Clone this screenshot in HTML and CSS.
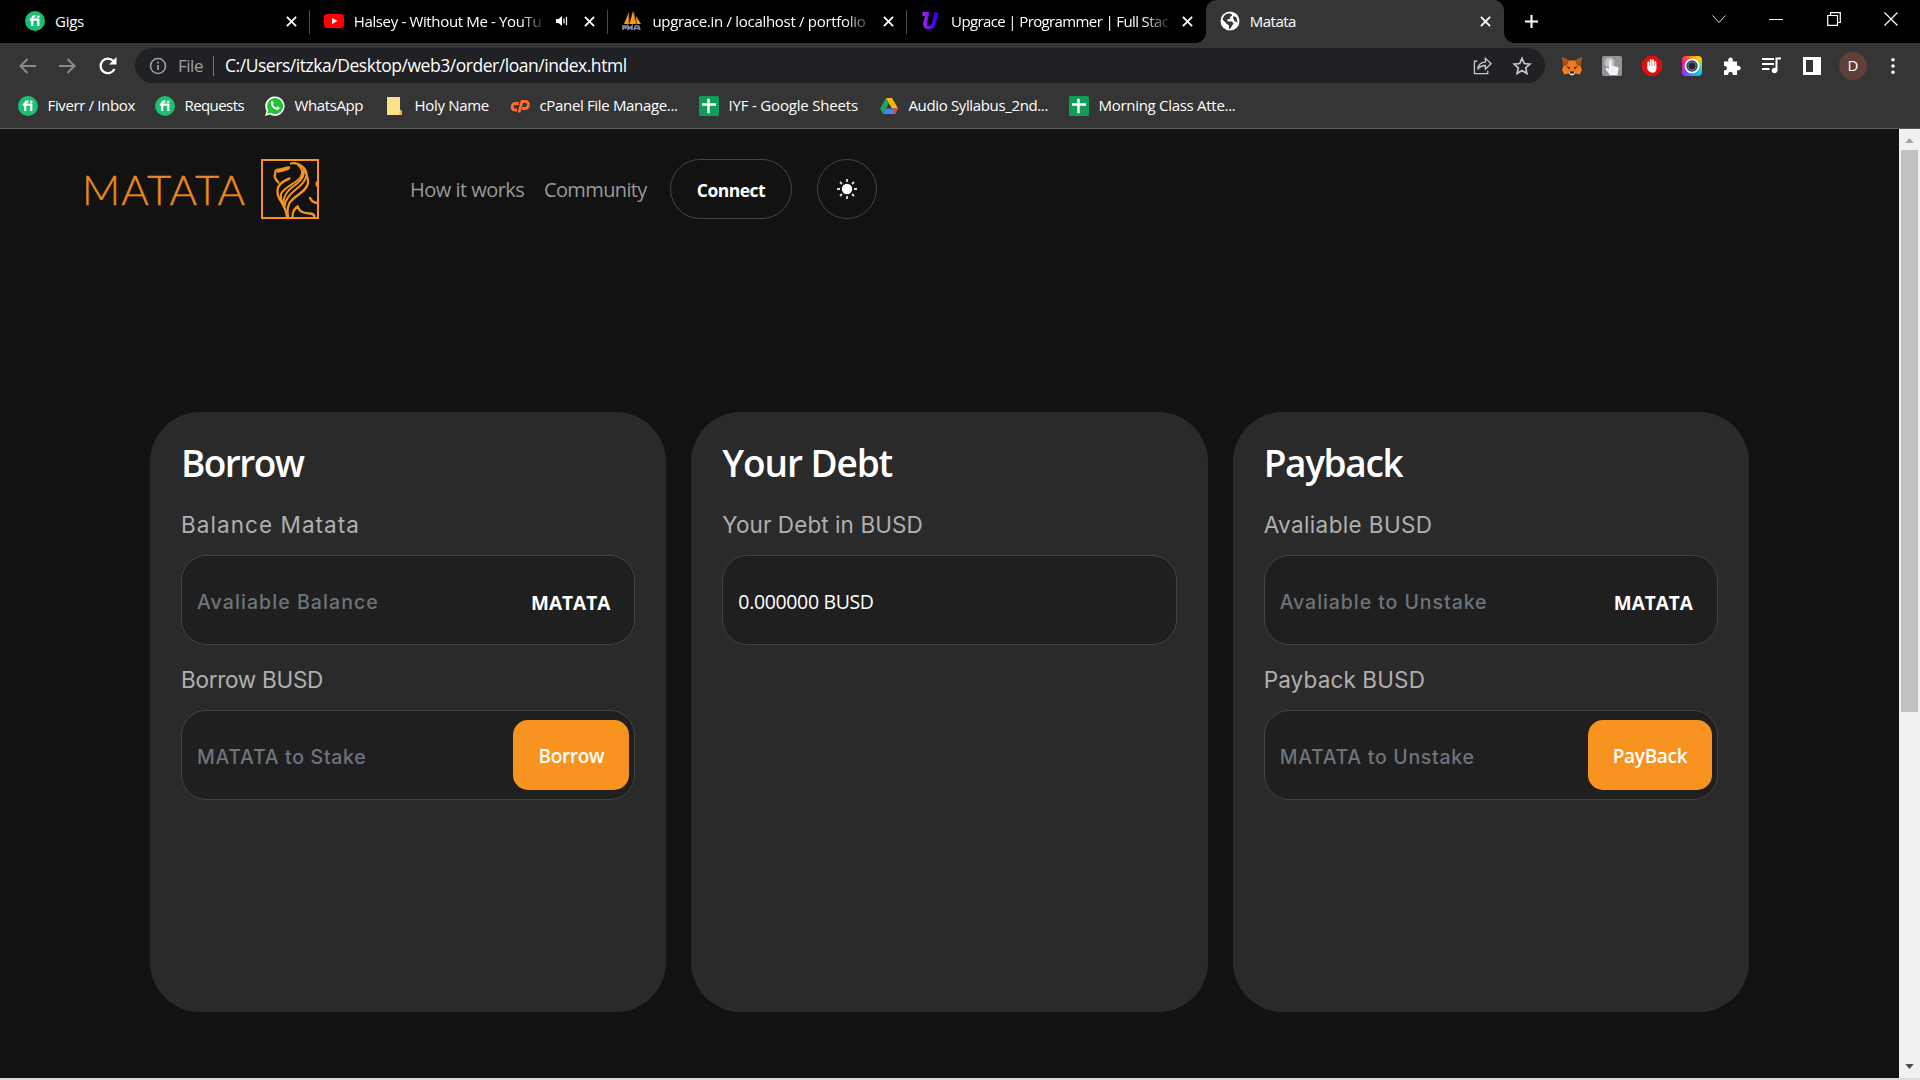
FILE: index.html
```html
<!DOCTYPE html>
<html lang="en">
<head>
<meta charset="utf-8">
<title>Matata</title>
<link rel="stylesheet" href="styles.css">
</head>
<body>
<svg class="defs" width="0" height="0">
  <symbol id="x" viewBox="0 0 12 12"><path d="M1 1l10 10M11 1L1 11" stroke="#fff" stroke-width="2" fill="none"/></symbol>
  <symbol id="fi" viewBox="0 0 20 20"><circle cx="10" cy="10" r="10" fill="#1dbf73"/><path d="M4.800 8.600h8.500v6.400M7.200 15V8c0-2 1-2.800 3.200-2.600" fill="none" stroke="#fff" stroke-width="2.200"/><circle cx="13.300" cy="5.800" r="1.300" fill="#fff"/></symbol>
  <symbol id="sheet" viewBox="0 0 20 20"><rect width="20" height="20" rx="1.500" fill="#0f9d58"/><path d="M9.500 2.800v14.400M3 8.500h14" stroke="#fff" stroke-width="2.400"/></symbol>
</svg>

<header class="browser">
  <div class="tabstrip">
    <div class="tab"><svg class="fav"><use href="#fi"/></svg><span class="title t-gigs">Gigs</span><svg class="close"><use href="#x"/></svg></div>
    <div class="tab split"><svg class="fav" viewBox="0 0 20 20"><rect y="3" width="20" height="14" rx="3.200" fill="#f00"/><path d="M8 7l5.500 3L8 13z" fill="#fff"/></svg><span class="title short fade t-halsey">Halsey - Without Me - YouTu</span><svg class="sound" viewBox="0 0 12 12"><path d="M0 4h2.500L6 1v10L2.500 8H0z" fill="#fff"/><path d="M8 3.500v5M10.500 2v8" stroke="#fff" stroke-width="1.200"/></svg><svg class="close"><use href="#x"/></svg></div>
    <div class="tab split"><svg class="fav" viewBox="0 0 20 20"><path d="M2 13L6.500 2l.5 11zM7.500 13L11 0l3 13zM14.500 13L14 5l5 8z" fill="#f89c0e"/><path d="M7 13L6.500 2M14 13L11.500 1" stroke="#c96a10"/><path d="M1 19v-4h3v2H1M6 19v-4l2 2.500 2-2.500v4M12 19l1.500-4h3l1.500 4M13 17.500h4" fill="none" stroke="#8a8cae" stroke-width="1.600"/></svg><span class="title fade t-upin">upgrace.in / localhost / portfolio</span><svg class="close"><use href="#x"/></svg></div>
    <div class="tab split"><svg class="fav" viewBox="0 0 20 20"><defs><linearGradient id="ug"><stop stop-color="#a32de8"/><stop offset=".6" stop-color="#5a08ee"/><stop offset="1" stop-color="#3d00f5"/></linearGradient></defs><path d="M1.500 3h4.600L4.100 13c-.6 4.500 6.900 5 8.500 0L15.500 1.500" fill="none" stroke="url(#ug)" stroke-width="3.800"/></svg><span class="title fade t-up">Upgrace | Programmer | Full Stac</span><svg class="close"><use href="#x"/></svg></div>
    <div class="tab active"><svg class="fav" viewBox="0 0 20 20"><circle cx="10" cy="10" r="9.500" fill="#fff"/><path d="M8 2.500c3 0 4 .5 4 2L10 6v2H7.500v2.500H12l1.500 2L12 15l-2 3c-1.500 0-1-2-1-3.500l-2-1.500-4.500-4.500C3.500 5 5 3 8 2.500zM13.500 5l3 1.500 1 5-3-1.500-1.500-3z" fill="#35363a"/></svg><span class="title t-mat">Matata</span><svg class="close"><use href="#x"/></svg></div>
    <svg class="plus" viewBox="0 0 16 16"><path d="M8 1v14M1 8h14" stroke="#fff" stroke-width="2.200"/></svg>
    <div class="window-controls">
      <svg viewBox="0 0 14 14"><path d="M.5 3.500L7 10.500l6.500-7" fill="none" stroke="#ddd"/></svg>
      <svg viewBox="0 0 14 14"><path d="M0 7.500h14" stroke="#fff"/></svg>
      <svg viewBox="0 0 14 14"><path d="M.7 3.500h9.800v9.800H.7zM3.500 3.500V.7h9.800v9.800h-2.800" fill="none" stroke="#fff" stroke-width="1.200"/></svg>
      <svg viewBox="0 0 14 14"><path d="M.5.5l13 13M13.500.5l-13 13" stroke="#fff" stroke-width="1.200"/></svg>
    </div>
  </div>

  <div class="toolbar">
    <div class="nav-buttons">
      <svg viewBox="0 0 20 20" class="dim"><path d="M18 10H3M9.500 3L2.500 10l7 7" /></svg>
      <svg viewBox="0 0 20 20" class="dim"><path d="M1 10h15M9.500 3l7 7-7 7" /></svg>
      <svg viewBox="0 0 20 20"><path d="M16.500 13A7.300 7.300 0 1 1 15.300 5" fill="none" stroke="#fff" stroke-width="2.200"/><path d="M18.500 1v7.500H11z" fill="#fff"/></svg>
    </div>
    <div class="omnibox">
      <svg class="info" viewBox="0 0 18 18"><circle cx="9" cy="9" r="7.500" fill="none" stroke="#9aa0a6" stroke-width="1.600"/><path d="M9 8v5M9 4.800v1.700" stroke="#9aa0a6" stroke-width="1.800"/></svg>
      <span class="scheme">File</span>
      <span class="url">C:/Users/itzka/Desktop/web3/order/loan/index.html</span>
      <svg class="share" viewBox="0 0 20 20"><path d="M4.500 5.500H1.500v13h14v-3M5 14c.5-5 3.500-7.500 8-7.500V2.500l6 5.700-6 5.600V10c-3.500 0-6 1-8 4z" fill="none" stroke="#c4c7c9" stroke-width="1.400"/></svg>
      <svg class="star" viewBox="0 0 20 20"><path d="M10 2.300l2.300 5.200 5.600.6-4.200 3.800 1.200 5.600-4.900-2.900-4.900 2.900 1.200-5.600L2.100 8.100l5.600-.6z" fill="none" stroke="#c4c7c9" stroke-width="1.700"/></svg>
    </div>
    <div class="extensions">
      <svg viewBox="0 0 20 20"><path d="M0 1l7 3.500h6L20 1l-1.500 9L20 14l-2 4.500-5-1-3 2.500-3-2.500-5 1L0 14l1.500-4z" fill="#f07d1c"/><path d="M0 1l7 3.500-2 5-3.500.5zM20 1l-7 3.500 2 5 3.500.5z" fill="#a84f1a"/><path d="M4 10.500l4 .5-.5 2.500zM16 10.500l-4 .5.5 2.500z" fill="#46271c"/><path d="M7 16h6l-1 3H8z" fill="#ddd"/><path d="M8 15.500h4v2H8z" fill="#222"/></svg>
      <svg viewBox="0 0 20 20"><rect width="20" height="20" rx="2" fill="#939496"/><circle cx="7.500" cy="6.500" r="5" fill="#c2c3c5"/><path d="M7 5.500c0-2 2.600-2 2.600 0v4l5.900 1.500c1 .3 1.200 1 1 2l-1 6H8l-4.500-6c0-1.500 2-1.500 3.500 0z" fill="#f0f4fa"/></svg>
      <svg viewBox="0 0 20 20"><path d="M6 0h8l6 6v8l-6 6H6l-6-6V6z" fill="#e40d0d"/><path d="M6.300 12V6.500M8.700 10V4M11.100 10V4.300M13.400 11V6" stroke="#fff" stroke-width="1.900" stroke-linecap="round"/><path d="M5.400 10h9v3c0 5-7 5-9 0z" fill="#fff"/></svg>
      <div class="camera"><svg viewBox="0 0 20 20"><circle cx="10" cy="10" r="6.600" fill="#394657" stroke="#fff" stroke-width="1.800"/><circle cx="10" cy="10" r="4" fill="#1d2937" stroke="#65758a"/></svg></div>
      <svg viewBox="0 0 20 20"><path d="M2 5.500h4.500C5 1 11 0 10.800 4v1.500H15v4.200c5-.8 5 5.300 0 4.500V19h-4.200c.6-4.500-5.200-4.500-4.600 0H2v-4.500c4 .5 4-5 0-4.500z" fill="#fff"/></svg>
      <svg viewBox="0 0 20 20"><path d="M0 3h12M0 8h12M0 13h7.500" stroke="#fff" stroke-width="2"/><circle cx="12.500" cy="14.500" r="2.700" fill="#fff"/><path d="M14.500 15V2.500H19" fill="none" stroke="#fff" stroke-width="2"/></svg>
      <svg viewBox="0 0 20 20"><path d="M1 1h18v18H1zM4 4v12h7V4z" fill="#fff" fill-rule="evenodd"/></svg>
    </div>
    <span class="avatar">D</span>
    <svg class="dots" viewBox="0 0 6 20"><circle cx="3" cy="3" r="2" fill="#fff"/><circle cx="3" cy="10" r="2" fill="#fff"/><circle cx="3" cy="17" r="2" fill="#fff"/></svg>
  </div>

  <div class="bookmarks">
    <a class="b1"><svg><use href="#fi"/></svg><span>Fiverr / Inbox</span></a>
    <a class="b2"><svg><use href="#fi"/></svg><span>Requests</span></a>
    <a class="b3"><svg viewBox="0 0 20 20"><path d="M0 20l1.500-5A9.700 9.700 0 1 1 5 18.500z" fill="#fff"/><path d="M2.200 17.800l1-3.600A8 8 0 1 1 6 17z" fill="#25c03c"/><path d="M6.300 5.500c1-1 1.700-.5 2.500 1.800L8 8.700c.7 1.500 1.700 2.400 3.200 3l1.300-1.300c2.500 1 2.500 1.300 1.700 2.500-3 3-10-3-7.900-7.400z" fill="#fff"/></svg><span>WhatsApp</span></a>
    <a class="b4"><svg viewBox="0 0 20 20"><path d="M2 1h13v13.500h2V19H2z" fill="#ffe08a"/><path d="M15 14.500h2V19h-3z" fill="#e5b93e"/></svg><span>Holy Name</span></a>
    <a class="b5"><svg viewBox="0 0 20 20"><path d="M9 7.500H5.500c-4.500 0-4.500 6.500 0 6.500H7M9 16.500l3-11h3.500c4.500 0 3.500 7-.5 7h-3" fill="none" stroke="#ff6c2c" stroke-width="2.800"/></svg><span>cPanel File Manage...</span></a>
    <a class="b6"><svg><use href="#sheet"/></svg><span>IYF - Google Sheets</span></a>
    <a class="b7"><svg viewBox="0 0 20 20"><path d="M7 2L1 12.500 4 18l6-10.500z" fill="#1fa463"/><path d="M7 2h6l6 10.500h-6z" fill="#ffba00"/><path d="M4 18l3-5.500h12L16 18z" fill="#4285f4"/><path d="M13 12.500h6L16 18z" fill="#ea4335"/></svg><span>Audio Syllabus_2nd...</span></a>
    <a class="b8"><svg><use href="#sheet"/></svg><span>Morning Class Atte...</span></a>
  </div>
</header>

<div class="viewport">
  <main class="page">
    <nav class="site-nav">
      <div class="brand"><span class="wordmark">MATATA</span>
        <svg viewBox="0 0 58 60"><g fill="none" stroke="#f7931e" stroke-width="2.300" stroke-linecap="round"><path d="M1 1h56v58H1z" stroke-width="2"/><path d="M28 8.500c-5 .5-8 2-12.500 2.500-2 .5-.5 2.500-1.500 4.500s0 4.500 3.500 8"/><path d="M27 10c-4 1-7 2-10 2.500"/><path d="M28.500 19.500C23 22 16 25 16.500 33c0 9 9 12 9.500 26"/><path d="M30 4.500c7-1.500 15 4 15.500 11 .5 3 2 4.500 1.500 8.500-1 8-12 12-17 18-4 4-4 10-3 17"/><path d="M37 6c4 3 6 8 2 13-5 6-16 9-19 16-.5 3 0 6 1.500 9" stroke-width="2"/><path d="M42.500 9c1.500 7-1 11-7 16-7 5-13 10-13 19" stroke-width="2"/><path d="M45 18c-2 11-20 14-21.500 30" stroke-width="2"/><path d="M31.500 58c0-6 2-8 5-10.500 3 7 7 6 12 7 3 0 5 1 5 4"/><path d="M49 39c2 4 5 5 8 5M57 22.500c-2 1-1.500 4 0 5" stroke-width="2.500"/></g></svg>
      </div>
      <a class="link how">How it works</a>
      <a class="link community">Community</a>
      <button class="connect">Connect</button>
      <button class="theme"><svg viewBox="0 0 22 22"><circle cx="11" cy="11" r="5.200" fill="#fff"/><path d="M11 1v3M11 18v3M1 11h3M18 11h3M4 4l2 2M16 16l2 2M18 4l-2 2M6 16l-2 2" stroke="#ddd" stroke-width="1.800"/></svg></button>
    </nav>

    <section class="cards">
      <article class="card">
        <h2 class="h-borrow">Borrow</h2>
        <label class="l-balance">Balance Matata</label>
        <div class="field"><span class="hint p-balance">Avaliable Balance</span><b class="unit">MATATA</b></div>
        <label class="l-borrow">Borrow BUSD</label>
        <div class="field"><span class="hint p-stake">MATATA to Stake</span><button class="action">Borrow</button></div>
      </article>
      <article class="card">
        <h2 class="h-debt">Your Debt</h2>
        <label class="l-debt">Your Debt in BUSD</label>
        <div class="field"><span class="value">0.000000 BUSD</span></div>
      </article>
      <article class="card">
        <h2 class="h-payback">Payback</h2>
        <label class="l-avail">Avaliable BUSD</label>
        <div class="field"><span class="hint p-avail">Avaliable to Unstake</span><b class="unit">MATATA</b></div>
        <label class="l-payback">Payback BUSD</label>
        <div class="field"><span class="hint p-unstake">MATATA to Unstake</span><button class="action wide">PayBack</button></div>
      </article>
    </section>
  </main>
  <div class="scrollbar">
    <svg viewBox="0 0 10 6"><path d="M0 6l5-6 5 6z" fill="#a3a3a3"/></svg>
    <div class="thumb"></div>
    <svg class="down" viewBox="0 0 10 6"><path d="M0 0l5 6 5-6z" fill="#505050"/></svg>
  </div>
</div>
<div class="edge"></div>
</body>
</html>
```
FILE: styles.css
```css
* { box-sizing: border-box; }
body {
  margin: 0;
  width: 1920px;
  height: 1080px;
  overflow: hidden;
  display: flex;
  flex-direction: column;
  background: #121212;
  color: #fff;
  font-family: "Open Sans", sans-serif;
}
svg { display: block; flex: none; overflow: visible; }
button { font-family: inherit; color: #fff; padding: 0; margin: 0; }
.defs { position: absolute; }

/* Browser chrome */
.browser { height: 129px; flex: none; background: #353535; border-bottom: 1px solid #5c5c5c; }
.tabstrip { height: 43px; background: #000; display: flex; align-items: center; padding-left: 11px; }
.tab { width: 298.700px; height: 43px; padding: 0 13px 1px 14px; display: flex; align-items: center; position: relative; }
.split::before { content: ""; position: absolute; left: -1px; top: 10px; width: 1px; height: 24px; background: #4c4c4c; }
.active { background: #353535; border-radius: 10px 10px 0 0; }
.active::before, .active::after { content: ""; position: absolute; bottom: 0; width: 10px; height: 10px; }
.active::before { left: -10px; background: radial-gradient(circle at 0 0, #000 9.500px, #353535 10px); }
.active::after { right: -10px; background: radial-gradient(circle at 100% 0, #000 9.500px, #353535 10px); }
.fav { width: 20px; height: 20px; margin-right: 10px; }
.title { width: 224px; font-size: 15px; line-height: 40px; padding-bottom: 1px; white-space: nowrap; }
.short { width: 194px; margin-right: 8px; }
.fade { -webkit-mask-image: linear-gradient(90deg, #000 86%, transparent 99%); mask-image: linear-gradient(90deg, #000 86%, transparent 99%); }
.t-gigs { letter-spacing: -.25px; }
.t-halsey { letter-spacing: -.35px; }
.t-upin { letter-spacing: -.3px; }
.t-up { letter-spacing: -.62px; }
.t-mat { letter-spacing: -.5px; }
.sound { width: 12px; height: 12px; margin-right: 14px; }
.close { width: 11px; height: 11px; margin-left: auto; }
.plus { width: 15px; height: 15px; margin-left: 20px; }
.window-controls { margin-left: auto; padding: 0 22px 6px 0; display: flex; gap: 43.500px; }
.window-controls svg { width: 14px; height: 14px; }

.toolbar { height: 45px; display: flex; align-items: center; }
.nav-buttons { width: 135px; padding-left: 18px; display: flex; gap: 20px; }
.nav-buttons svg { width: 20px; height: 20px; }
.dim path { fill: none; stroke: #8b8b8b; stroke-width: 2; }
.omnibox { width: 1410px; height: 35px; border-radius: 18px; background: #202124; display: flex; align-items: center; padding: 0 13px 0 14px; }
.info { width: 18px; height: 18px; }
.scheme { font-size: 17px; letter-spacing: -.48px; color: #9aa0a6; margin-left: 11px; width: 36px; line-height: 20px; border-right: 1.500px solid #777; }
.url { font-size: 17.500px; letter-spacing: -.46px; margin-left: 11px; padding-bottom: 1px; }
.share { width: 19px; height: 19px; margin-left: auto; }
.star { width: 20px; height: 20px; margin-left: 20px; }
.extensions { display: flex; gap: 20px; margin-left: 17px; }
.extensions > * { width: 20px; height: 20px; }
.camera { border-radius: 4px; background: conic-gradient(#ff9800, #ffd000 45deg, #18d5e8 110deg, #1c9aff 180deg, #9038ff 230deg, #ff1592 290deg, #ff5147 330deg, #ff9800); }
.avatar { width: 28px; height: 28px; border-radius: 50%; background: #5d4037; font-size: 15px; line-height: 27px; text-align: center; margin-left: 17px; }
.dots { width: 6px; height: 18px; margin-left: 22.500px; }

.bookmarks { height: 36px; display: flex; align-items: center; padding-left: 18px; font-size: 15px; }
.bookmarks a { display: flex; align-items: center; gap: 9.500px; white-space: nowrap; }
.bookmarks svg { width: 20px; height: 20px; }
.bookmarks span { padding-bottom: 2px; }
.b1 { width: 137px; letter-spacing: -.36px; }
.b2 { width: 110px; letter-spacing: -.58px; }
.b3 { width: 120px; letter-spacing: -.4px; }
.b4 { width: 125px; letter-spacing: -.32px; }
.b5 { width: 189px; letter-spacing: -.34px; }
.b6 { width: 180px; letter-spacing: -.18px; }
.b7 { width: 190px; letter-spacing: -.36px; }
.b8 { letter-spacing: -.29px; }

/* Site */
.viewport { flex: 1; display: flex; min-height: 0; }
.page { flex: 1; background: #121212; padding-top: 30px; }
.edge { height: 2px; flex: none; background: #dcdcdc; }
.site-nav { height: 60px; padding-left: 82px; display: flex; align-items: center; }
.brand { width: 328px; display: flex; align-items: center; }
.brand svg { width: 58px; height: 60px; }
.wordmark { width: 179px; color: #e8891c; font: 300 42px/60px Lato, sans-serif; letter-spacing: 1.100px; -webkit-text-stroke: .4px #e8891c; white-space: nowrap; }
.link { color: #999; font-size: 20px; line-height: 28px; padding-top: 1px; white-space: nowrap; }
.how { width: 134px; letter-spacing: -.52px; }
.community { width: 126px; letter-spacing: -.63px; }
.connect { width: 122px; height: 60px; border: 1px solid #454545; border-radius: 30px; background: none; font-size: 17.500px; font-weight: 700; letter-spacing: -.5px; padding-top: 2px; }
.theme { width: 60px; height: 60px; border: 1px solid #454545; border-radius: 50%; background: none; margin-left: 25px; display: grid; place-items: center; }
.theme svg { width: 22px; height: 22px; }

.cards { margin: 193px 0 0 150px; width: 1599px; height: 600px; display: grid; grid-template-columns: repeat(3, 1fr); gap: 25px; }
.card { background: #2a2a2a; border-radius: 50px; padding: 25px 31px; }
.card h2 { margin: 0; height: 52px; font-size: 37px; line-height: 51px; font-weight: 600; }
.h-borrow { letter-spacing: -1.550px; }
.h-debt { letter-spacing: -1.100px; }
.h-payback { letter-spacing: -1.350px; }
.card label { display: block; height: 66px; padding-top: 19px; font: 400 22.500px/34px Inter, sans-serif; color: #b0b0b0; }
.card .field + label { height: 65px; padding-top: 18px; }
.field { height: 90px; border: 1px solid #444; border-radius: 25px; background: #1f1f1f; display: flex; align-items: center; justify-content: space-between; padding: 0 5px 0 15px; white-space: nowrap; }
.hint { font: 500 19.500px/30px Inter, sans-serif; color: #6c757d; padding-top: 3px; }
.value { font-size: 19.500px; letter-spacing: -.35px; padding-top: 3px; }
.unit { font-size: 19px; padding: 5px 19px 0 0; }
.l-balance { letter-spacing: 1.060px; }
.l-borrow { letter-spacing: -.28px; }
.l-debt { letter-spacing: .08px; }
.l-avail { letter-spacing: .38px; }
.l-payback { letter-spacing: .14px; }
.p-balance { letter-spacing: 1.080px; }
.p-stake { letter-spacing: .7px; }
.p-avail { letter-spacing: .94px; }
.p-unstake { letter-spacing: .7px; }
.action { width: 116px; height: 70px; border: 0; border-radius: 15px; background: #f7931e; font-size: 19px; font-weight: 600; letter-spacing: -.3px; padding-top: 2px; }
.wide { width: 124px; }

.scrollbar { width: 21px; background: #f1f1f1; display: flex; flex-direction: column; align-items: center; padding: 9px 0; }
.scrollbar svg { width: 9px; height: 5px; }
.thumb { width: 17px; height: 562px; margin-top: 7px; background: #c1c1c1; }
.down { margin-top: auto; }
```
